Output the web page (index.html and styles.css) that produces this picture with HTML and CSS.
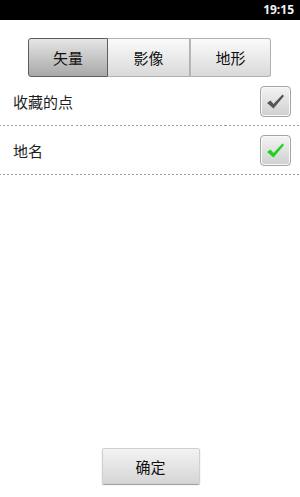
FILE: index.html
```html
<!DOCTYPE html>
<html>
<head>
<meta charset="utf-8">
<link rel="stylesheet" href="styles.css">
</head>
<body>
<div class="screen">
  <div class="statusbar"><span class="time">19:15</span></div>
  <div class="segmented">
    <div class="seg seg-active">矢量</div>
    <div class="seg seg-mid">影像</div>
    <div class="seg seg-last">地形</div>
  </div>
  <div class="list">
    <div class="row">
      <span class="label">收藏的点</span>
      <span class="check">
        <svg width="19" height="17" viewBox="0 0 19 17"><path d="M1 10 L4.5 7.5 L7.5 11 L16.5 1.5 L18 3 L7.5 15.5 Z" fill="#555555"/></svg>
      </span>
    </div>
    <div class="row">
      <span class="label">地名</span>
      <span class="check">
        <svg width="19" height="17" viewBox="0 0 19 17"><path d="M1 10 L4.5 7.5 L7.5 11 L16.5 1.5 L18 3 L7.5 15.5 Z" fill="#1ed21e"/></svg>
      </span>
    </div>
  </div>
  <div class="spacer"></div>
  <div class="footer">
    <div class="btn">确定</div>
  </div>
</div>
</body>
</html>
```

FILE: styles.css
```css
html, body {
  margin: 0;
  padding: 0;
  background: #ffffff;
}
body {
  font-family: "Noto Sans CJK SC", "Noto Sans", sans-serif;
  color: #222;
}
.screen {
  width: 300px;
  height: 497px;
  display: flex;
  flex-direction: column;
}
.statusbar {
  height: 20px;
  background: #000;
  display: flex;
  align-items: center;
  justify-content: flex-end;
  padding-right: 6px;
}
.time {
  font-family: "Open Sans", "DejaVu Sans", sans-serif;
  font-weight: bold;
  font-size: 12px;
  color: #f2f2f2;
  line-height: 20px;
}
.segmented {
  margin: 18px 29px 0 28px;
  height: 39px;
  display: flex;
}
.seg {
  display: flex;
  align-items: center;
  justify-content: center;
  font-size: 15px;
  color: #111;
  background: linear-gradient(#fbfbfb, #d9d9d9);
  border: 1px solid #b0b0b0;
  box-sizing: border-box;
}
.seg-active {
  width: 80px;
  background: linear-gradient(#e6e6e6, #a8a8a8);
  border: 1px solid #5e5e5e;
  border-radius: 3px 0 0 3px;
}
.seg-mid {
  width: 82px;
  border-left: none;
}
.seg-last {
  flex: 1;
  border-left: 1px solid #b8b8b8;
  border-radius: 0 3px 3px 0;
}
.list {
  display: flex;
  flex-direction: column;
}
.row {
  height: 48px;
  display: flex;
  align-items: center;
  justify-content: space-between;
  padding: 0 9px 0 13px;
  border-bottom: 1px solid #a0a0a0;
  border-image: repeating-linear-gradient(to right, #9c9c9c 0 2px, transparent 2px 4px) 1;
}
.label {
  font-size: 15px;
  color: #1e1e1e;
}
.check {
  width: 31px;
  height: 31px;
  box-sizing: border-box;
  border: 1px solid #a4a4a4;
  border-radius: 4px;
  background: linear-gradient(#f4f4f4, #cfcfcf);
  display: flex;
  align-items: center;
  justify-content: center;
  box-shadow: inset 0 0 0 1px #fafafa;
}
.spacer {
  flex: 1;
}
.footer {
  display: flex;
  justify-content: center;
  padding-bottom: 13px;
}
.btn {
  width: 98px;
  height: 36px;
  box-sizing: border-box;
  display: flex;
  align-items: center;
  justify-content: center;
  font-size: 15px;
  color: #111;
  background: linear-gradient(#f3f3f3, #d6d6d6);
  border: 1px solid #d0d0d0;
  border-radius: 2px;
  box-shadow: 0 1px 1px #9a9a9a;
  margin-left: 1px;
}
```
